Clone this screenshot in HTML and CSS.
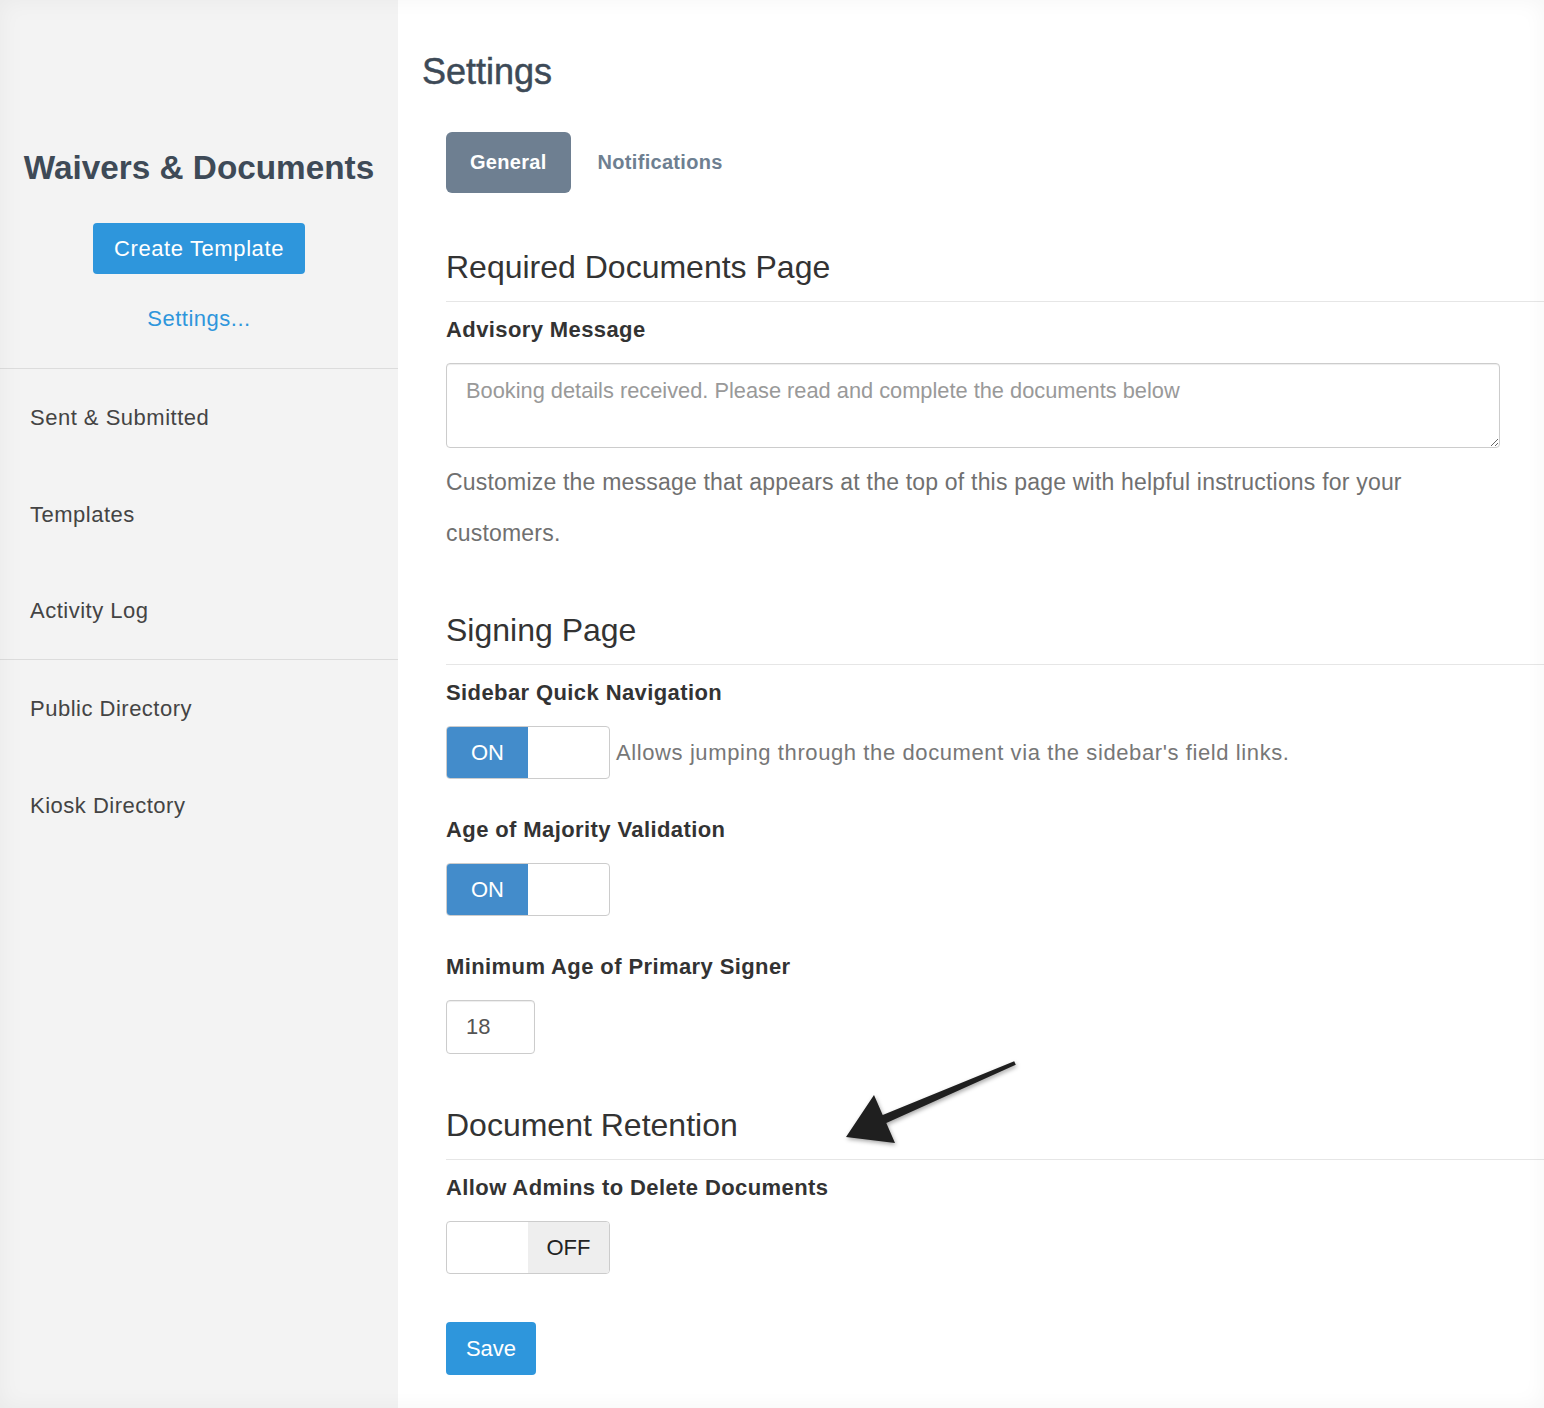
FILE: index.html
```html
<!DOCTYPE html>
<html lang="en">
<head>
  <meta charset="UTF-8" />
  <meta name="viewport" content="width=device-width, initial-scale=1.0" />
  <title>Settings - Waivers &amp; Documents</title>
  <link rel="stylesheet" href="styles.css">
</head>
<body>
  <div class="page">

    <aside class="sidebar">
      <div class="sidebar-head">
        <h1 class="sidebar-title">Waivers &amp; Documents</h1>
        <a class="btn btn-create" href="#">Create Template</a>
        <a class="sidebar-settings" href="#">Settings...</a>
      </div>
      <nav class="side-nav">
        <a href="#">Sent &amp; Submitted</a>
        <a href="#">Templates</a>
        <a href="#">Activity Log</a>
      </nav>
      <nav class="side-nav">
        <a href="#">Public Directory</a>
        <a href="#">Kiosk Directory</a>
      </nav>
    </aside>

    <main class="main">
      <h1 class="page-title">Settings</h1>

      <form class="settings-form" onsubmit="return false;">
        <div class="tabs">
          <a class="tab active" href="#">General</a>
          <a class="tab" href="#">Notifications</a>
        </div>

        <!-- Required documents page -->
        <h2 class="section-title">Required Documents Page</h2>
        <div class="field">
          <label class="field-label" for="advisory">Advisory Message</label>
          <textarea id="advisory" class="textarea" placeholder="Booking details received. Please read and complete the documents below"></textarea>
          <p class="help-text">Customize the message that appears at the top of this page with helpful instructions for your customers.</p>
        </div>

        <!-- Signing page -->
        <h2 class="section-title">Signing Page</h2>
        <div class="field">
          <div class="field-label">Sidebar Quick Navigation</div>
          <div class="toggle-row">
            <div class="toggle"><span class="toggle-on">ON</span><span class="toggle-blank"></span></div>
            <span class="toggle-desc">Allows jumping through the document via the sidebar's field links.</span>
          </div>
        </div>
        <div class="field">
          <div class="field-label">Age of Majority Validation</div>
          <div class="toggle"><span class="toggle-on">ON</span><span class="toggle-blank"></span></div>
        </div>
        <div class="field">
          <label class="field-label" for="min-age">Minimum Age of Primary Signer</label>
          <input id="min-age" class="input-small" type="text" value="18">
        </div>

        <!-- Document retention -->
        <h2 class="section-title">Document Retention</h2>
        <div class="field">
          <div class="field-label">Allow Admins to Delete Documents</div>
          <div class="toggle"><span class="toggle-blank"></span><span class="toggle-off">OFF</span></div>
        </div>

        <div class="form-actions">
          <button class="btn btn-save" type="submit">Save</button>
        </div>
      </form>
    </main>

    <svg class="callout-arrow" viewBox="830 1050 200 110" width="200" height="110" aria-hidden="true">
      <polygon points="846,1137 874,1095 882.7,1114.9 1014.2,1061.2 1015.8,1064.8 886.3,1123.1 895,1143" fill="#1f1f1f"/>
    </svg>
  </div>
</body>
</html>
```

FILE: styles.css
```css
/* Base */
body { margin: 0; font-family: "Liberation Sans", Arial, sans-serif; color: #333; background: #fff; }
a { text-decoration: none; }
.page { display: flex; min-height: 1408px; position: relative; }
.page::after {
  content: ""; position: fixed; inset: 0; pointer-events: none;
  box-shadow: inset 0 0 22px rgba(0,0,0,0.045);
}

/* Sidebar */
.sidebar { width: 398px; flex-shrink: 0; background: #f3f3f3; }
.sidebar-head {
  padding: 148px 0 34px; text-align: center; border-bottom: 1px solid #dcdcdc;
}
.sidebar-title { margin: 0; font-size: 33.3px; line-height: 40px; font-weight: bold; color: #3e4a57; }
.btn { display: inline-block; background: #2e96dc; color: #fff; border: none; border-radius: 4px; font-family: inherit; cursor: pointer; }
.btn-create {
  margin-top: 35px; width: 212px; height: 51px; line-height: 51px;
  font-size: 22px; letter-spacing: 0.6px;
}
.sidebar-settings { display: block; margin-top: 30px; line-height: 30px; font-size: 22px; letter-spacing: 0.5px; color: #2e96dc; }
.side-nav { display: flex; flex-direction: column; }
.side-nav + .side-nav { border-top: 1px solid #dcdcdc; }
.side-nav a {
  height: 97px; display: flex; align-items: center; padding: 0 30px;
  font-size: 22px; letter-spacing: 0.5px; color: #444;
}
.side-nav:first-of-type a:last-child { height: 96px; }

/* Main area */
.main { flex: 1; padding: 52px 0 0 24px; background: #fff; }
.page-title {
  margin: 0; font-size: 36px; line-height: 40px; font-weight: normal; color: #3d4a57;
  -webkit-text-stroke: 0.5px #3d4a57;
}
.settings-form { padding-left: 24px; }

.tabs { display: flex; gap: 3px; margin-top: 40px; }
.tab {
  height: 61px; line-height: 61px; padding: 0 24px; border-radius: 6px;
  font-size: 20px; font-weight: bold; letter-spacing: 0.3px; color: #6e7f91;
}
.tab.active { background: #6e7f91; color: #fff; }

.section-title {
  margin: 54px 0 0; padding-bottom: 16px; border-bottom: 1px solid #e6e6e6;
  font-size: 32px; line-height: 35px; font-weight: normal; color: #333;
}
.tabs + .section-title { margin-top: 57px; }
.field { margin-top: 36px; }
.section-title + .field { margin-top: 13px; }
.field-label {
  display: block; margin-bottom: 18px; line-height: 30px;
  font-size: 22px; font-weight: bold; letter-spacing: 0.4px; color: #333;
}

.textarea {
  display: block; box-sizing: border-box; width: 1054px; height: 85px; margin: 0;
  padding: 12px 19px; border: 1px solid #ccc; border-radius: 4px;
  box-shadow: inset 0 1px 1px rgba(0,0,0,0.075);
  font-family: inherit; font-size: 21.8px; line-height: 30px; color: #555;
}
.textarea::placeholder { color: #999; }
.help-text {
  margin: 9px 0 0; max-width: 1054px;
  font-size: 23px; letter-spacing: 0.2px; line-height: 51px; color: #707070;
}

/* On/off switches */
.toggle-row { display: flex; align-items: center; gap: 6px; }
.toggle {
  display: flex; box-sizing: border-box; width: 164px; height: 53px;
  border: 1px solid #ccc; border-radius: 4px; overflow: hidden; background: #fff;
}
.toggle span { display: flex; align-items: center; justify-content: center; font-size: 22px; }
.toggle-on { width: 81px; background: #438ccb; color: #fff; }
.toggle-off { flex: 1; background: #eee; color: #222; }
.toggle-blank { flex: 1; }
.toggle-blank:first-child { flex: 0 0 81px; }
.toggle-desc { font-size: 22px; letter-spacing: 0.6px; color: #777; }

.input-small {
  display: block; box-sizing: border-box; width: 89px; height: 54px; margin: 0;
  padding: 0 19px; border: 1px solid #ccc; border-radius: 4px;
  box-shadow: inset 0 1px 1px rgba(0,0,0,0.075);
  font-family: inherit; font-size: 22px; color: #555;
}

.form-actions { margin-top: 48px; }
.btn-save { width: 90px; height: 53px; font-size: 22px; padding: 0; }

/* Pointer drawn over the retention section */
.callout-arrow {
  position: absolute; left: 830px; top: 1050px;
  filter: drop-shadow(1px 2px 2px rgba(0,0,0,0.35));
}
```
